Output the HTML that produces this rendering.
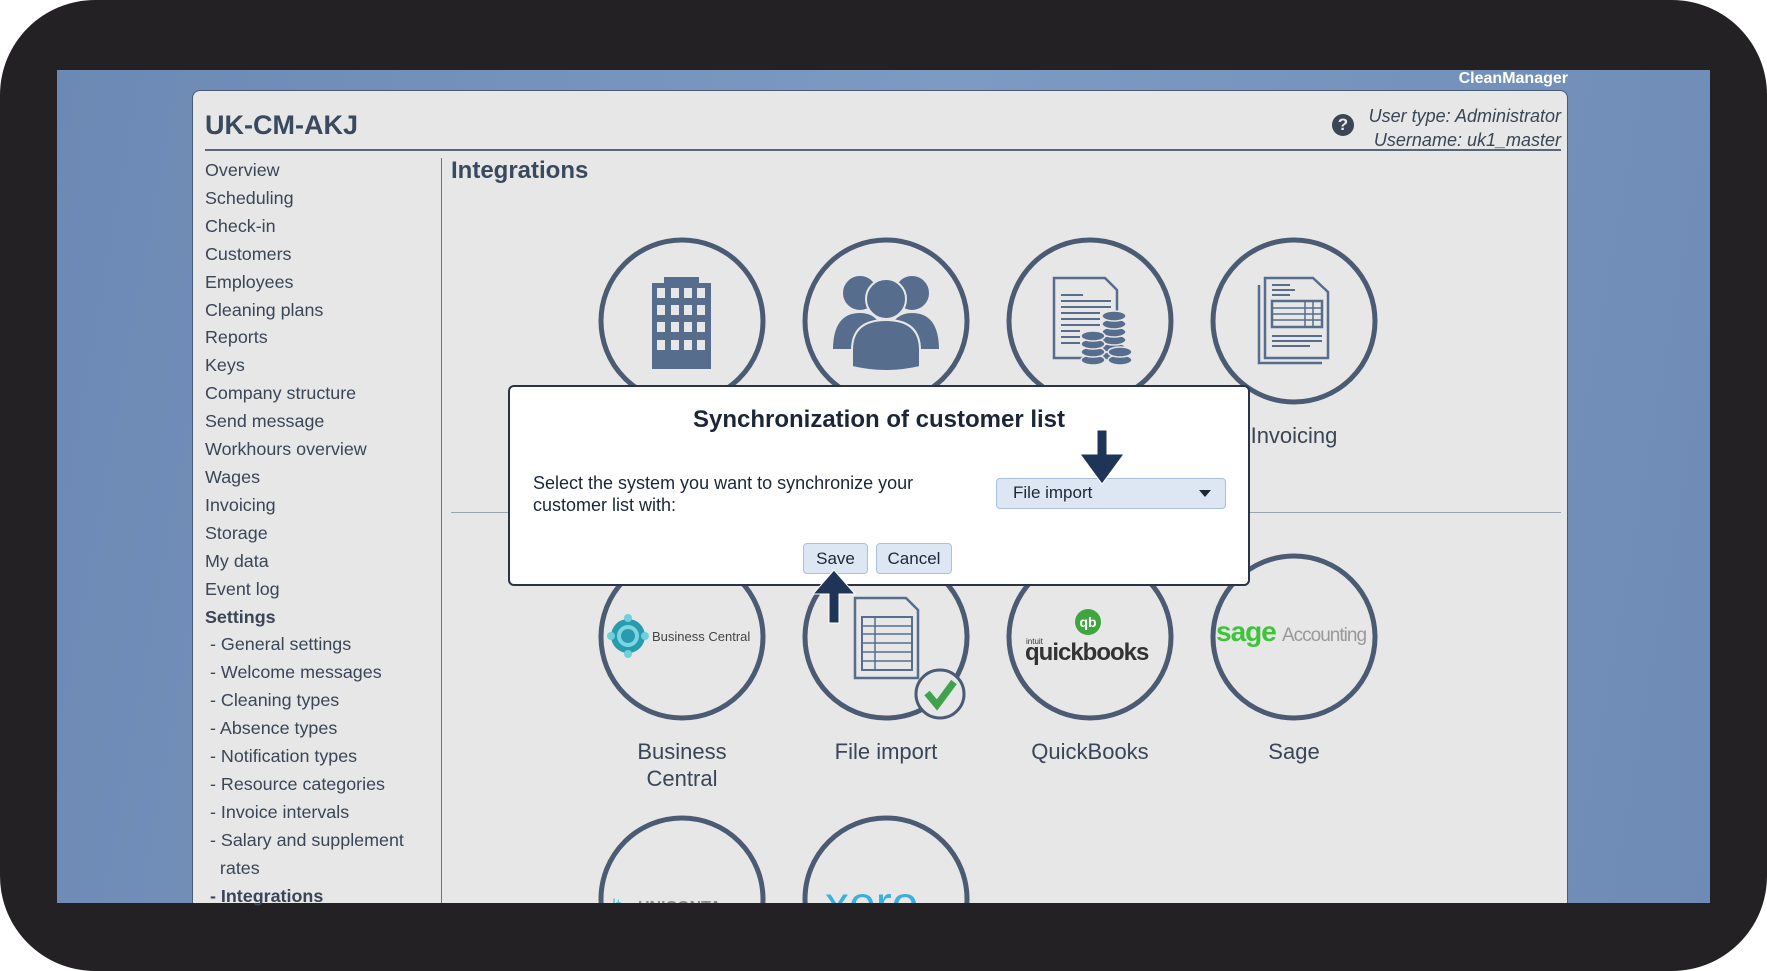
<!DOCTYPE html>
<html><head><meta charset="utf-8"><style>
*{margin:0;padding:0;box-sizing:border-box}
body{width:1767px;height:971px;background:#fff;font-family:"Liberation Sans",sans-serif;overflow:hidden;position:relative}
.frame{position:absolute;left:0;top:0;width:1767px;height:971px;background:#232123;border-radius:95px}
.screen{position:absolute;left:57px;top:70px;width:1653px;height:833px;background:linear-gradient(100deg,#6b89b4 0%,#7c9ac2 50%,#6d8bb5 100%);overflow:hidden}
.panel{position:absolute;left:192px;top:90px;width:1376px;height:813px;background:#e7e7e7;border-radius:8px 8px 0 0;border:1px solid #4a5a70;border-bottom:none}
.t{position:absolute;white-space:nowrap;color:#3a4556}
.side{position:absolute;left:205px;top:157px;font-size:17.9px;line-height:27.9px;color:#3a4556}
.side div{white-space:nowrap}
.lbl{position:absolute;font-size:22px;color:#3a4556;text-align:center;width:200px;line-height:27px}
</style></head><body>
<div class="frame"></div>
<div class="screen"></div>
<div class="t" style="left:1440px;top:70px;color:#fff;font-weight:bold;font-size:16px;width:128px;text-align:right">CleanManager</div>
<div class="panel"></div>
<div class="t" style="left:205px;top:110px;font-size:27px;font-weight:bold;color:#3a4a5e">UK-CM-AKJ</div>
<div class="t" style="top:104px;width:1261px;left:300px;text-align:right;font-style:italic;font-size:18px;line-height:24px">User type: Administrator<br>Username: uk1_master</div>
<div style="position:absolute;left:1332px;top:114px;width:22px;height:22px;border-radius:50%;background:#3a4556;color:#e7e7e7;font-weight:bold;font-size:17px;text-align:center;line-height:22px">?</div>
<div style="position:absolute;left:205px;top:149px;width:1356px;height:2px;background:#5a6678"></div>
<div style="position:absolute;left:441px;top:158px;width:1px;height:745px;background:#6a7484"></div>
<div class="side">
<div>Overview</div><div>Scheduling</div><div>Check-in</div><div>Customers</div><div>Employees</div><div>Cleaning plans</div><div>Reports</div><div>Keys</div><div>Company structure</div><div>Send message</div><div>Workhours overview</div><div>Wages</div><div>Invoicing</div><div>Storage</div><div>My data</div><div>Event log</div><div style="font-weight:bold">Settings</div>
<div>&nbsp;- General settings</div><div>&nbsp;- Welcome messages</div><div>&nbsp;- Cleaning types</div><div>&nbsp;- Absence types</div><div>&nbsp;- Notification types</div><div>&nbsp;- Resource categories</div><div>&nbsp;- Invoice intervals</div><div>&nbsp;- Salary and supplement</div><div>&nbsp;&nbsp;&nbsp;rates</div><div style="font-weight:bold">&nbsp;- Integrations</div>
</div>
<div class="t" style="left:451px;top:157px;font-size:24px;font-weight:bold;color:#3a4a5e">Integrations</div>
<div style="position:absolute;left:451px;top:512px;width:1110px;height:1px;background:#9aa2ae"></div>

<svg width="1767" height="971" style="position:absolute;left:0;top:0" viewBox="0 0 1767 971">
<defs><clipPath id="c"><rect x="57" y="70" width="1653" height="833"/></clipPath></defs>
<g clip-path="url(#c)" fill="none" stroke="#4b5b74" stroke-width="5">
<circle cx="682" cy="321" r="81"/><circle cx="886" cy="321" r="81"/><circle cx="1090" cy="321" r="81"/><circle cx="1294" cy="321" r="81"/>
<circle cx="682" cy="637" r="81"/><circle cx="886" cy="637" r="81"/><circle cx="1090" cy="637" r="81"/><circle cx="1294" cy="637" r="81"/>
<circle cx="682" cy="899" r="81"/><circle cx="886" cy="899" r="81"/>
</g>
<rect x="652" y="283" width="59" height="86" fill="#566d8e"/><rect x="664" y="277" width="35" height="8" fill="#566d8e"/>
<g fill="#e7e7e7">
<rect x="657" y="288" width="8" height="10"/><rect x="671" y="288" width="8" height="10"/><rect x="684" y="288" width="8" height="10"/><rect x="697" y="288" width="8" height="10"/>
<rect x="657" y="305" width="8" height="10"/><rect x="671" y="305" width="8" height="10"/><rect x="684" y="305" width="8" height="10"/><rect x="697" y="305" width="8" height="10"/>
<rect x="657" y="322" width="8" height="10"/><rect x="671" y="322" width="8" height="10"/><rect x="684" y="322" width="8" height="10"/><rect x="697" y="322" width="8" height="10"/>
<rect x="657" y="340" width="8" height="10"/><rect x="671" y="340" width="8" height="10"/><rect x="684" y="340" width="8" height="10"/><rect x="697" y="340" width="8" height="10"/>
</g>
<g fill="#566d8e" stroke="#e7e7e7" stroke-width="2">
<circle cx="860" cy="293" r="18"/><circle cx="912" cy="293" r="18"/>
<path d="M832 350 Q832 312 860 312 Q886 312 886 350 Z"/><path d="M886 350 Q886 312 912 312 Q940 312 940 350 Z"/>
<circle cx="886" cy="299" r="20"/>
<path d="M852 367 L852 350 Q852 320 886 320 Q920 320 920 350 L920 367 Q886 375 852 367Z"/>
</g>
<g fill="none" stroke="#566d8e" stroke-width="2.5">
<path d="M1054 278 L1105 278 L1117 290 L1117 358 L1054 358 Z"/>
</g>
<g stroke="#566d8e" stroke-width="2"><line x1="1061" y1="295" x2="1083" y2="295"/><line x1="1061" y1="301" x2="1111" y2="301"/><line x1="1061" y1="307" x2="1111" y2="307"/><line x1="1061" y1="313" x2="1100" y2="313"/><line x1="1061" y1="319" x2="1100" y2="319"/><line x1="1061" y1="325" x2="1100" y2="325"/><line x1="1061" y1="331" x2="1080" y2="331"/><line x1="1061" y1="337" x2="1080" y2="337"/><line x1="1061" y1="343" x2="1080" y2="343"/></g>
<g fill="#566d8e" stroke="#e7e7e7" stroke-width="1.5">
<ellipse cx="1114" cy="356" rx="12" ry="5"/><ellipse cx="1114" cy="348" rx="12" ry="5"/><ellipse cx="1114" cy="340" rx="12" ry="5"/><ellipse cx="1114" cy="332" rx="12" ry="5"/><ellipse cx="1114" cy="324" rx="12" ry="5"/><ellipse cx="1114" cy="316" rx="12" ry="5"/>
<ellipse cx="1093" cy="360" rx="12" ry="5"/><ellipse cx="1093" cy="352" rx="12" ry="5"/><ellipse cx="1093" cy="344" rx="12" ry="5"/><ellipse cx="1093" cy="336" rx="12" ry="5"/>
<ellipse cx="1120" cy="360" rx="12" ry="5"/><ellipse cx="1120" cy="352" rx="12" ry="5"/>
</g>
<g fill="none" stroke="#566d8e" stroke-width="2.5">
<path d="M1259 285 L1259 363 L1322 363"/>
<path d="M1265 278 L1313 278 L1328 292 L1328 358 L1265 358 Z"/>
<rect x="1272" y="301" width="50" height="26"/>
</g>
<g stroke="#566d8e" stroke-width="1.5"><line x1="1272" y1="308" x2="1322" y2="308"/><line x1="1272" y1="314" x2="1322" y2="314"/><line x1="1272" y1="320" x2="1322" y2="320"/><line x1="1305" y1="301" x2="1305" y2="327"/><line x1="1313" y1="301" x2="1313" y2="327"/></g>
<g stroke="#566d8e" stroke-width="2"><line x1="1272" y1="285" x2="1290" y2="285"/><line x1="1272" y1="290" x2="1295" y2="290"/><line x1="1272" y1="295" x2="1290" y2="295"/><line x1="1272" y1="336" x2="1322" y2="336"/><line x1="1272" y1="341" x2="1322" y2="341"/><line x1="1272" y1="346" x2="1310" y2="346"/></g>
<circle cx="628" cy="636" r="17" fill="#2a9bae"/><circle cx="628" cy="636" r="9" fill="none" stroke="#7ad6e0" stroke-width="4"/>
<circle cx="628" cy="618" r="4" fill="#6fd0db"/><circle cx="628" cy="654" r="4" fill="#6fd0db"/><circle cx="611" cy="636" r="4" fill="#6fd0db"/><circle cx="645" cy="636" r="4" fill="#6fd0db"/>
<text x="652" y="641" font-family="Liberation Sans" font-size="13" fill="#444">Business Central</text>
<path d="M855 598 L906 598 L918 610 L918 678 L855 678 Z" fill="#e7e7e7" stroke="#566d8e" stroke-width="2.5"/>
<rect x="862" y="617" width="50" height="53" fill="none" stroke="#566d8e" stroke-width="2"/>
<g stroke="#566d8e" stroke-width="1.5"><line x1="862" y1="626" x2="912" y2="626"/><line x1="862" y1="634" x2="912" y2="634"/><line x1="862" y1="643" x2="912" y2="643"/><line x1="862" y1="652" x2="912" y2="652"/><line x1="862" y1="661" x2="912" y2="661"/><line x1="875" y1="617" x2="875" y2="670"/></g>
<circle cx="940" cy="694" r="24" fill="#e7e7e7" stroke="#4b5b74" stroke-width="3"/>
<path d="M927 693 L937 705 L954 682" fill="none" stroke="#3fa34d" stroke-width="7"/>
<circle cx="1088" cy="622" r="13" fill="#3ea53f"/><text x="1088" y="627" text-anchor="middle" font-family="Liberation Sans" font-size="14" font-weight="bold" fill="#fff">qb</text>
<text x="1026" y="644" font-family="Liberation Sans" font-size="8" fill="#333">intuit</text>
<text x="1025" y="660" font-family="Liberation Sans" font-size="24" font-weight="bold" fill="#333" letter-spacing="-1">quickbooks</text>
<text x="1216" y="641" font-family="Liberation Sans" font-size="28" font-weight="bold" fill="#3ec43a" letter-spacing="-1">sage</text>
<text x="1282" y="641" font-family="Liberation Sans" font-size="19" fill="#999" letter-spacing="-1">Accounting</text>
<g clip-path="url(#c)">
<text x="612" y="912" font-family="Liberation Sans" font-size="18" fill="#6cc">lt</text>
<text x="638" y="912" font-family="Liberation Sans" font-size="16" font-weight="bold" fill="#888">UNICONTA</text>
<text x="825" y="920" font-family="Liberation Sans" font-size="48" fill="#3ab0dd">xero</text>
</g>
</svg>

<div class="lbl" style="left:1194px;top:422px">Invoicing</div>
<div class="lbl" style="left:582px;top:738px">Business<br>Central</div>
<div class="lbl" style="left:786px;top:738px">File import</div>
<div class="lbl" style="left:990px;top:738px">QuickBooks</div>
<div class="lbl" style="left:1194px;top:738px">Sage</div>

<div style="position:absolute;left:508px;top:385px;width:742px;height:201px;background:#fff;border:2px solid #2a3444;border-radius:6px"></div>
<div class="t" style="left:508px;top:406px;width:742px;text-align:center;font-size:24px;font-weight:bold;color:#1c2638">Synchronization of customer list</div>
<div class="t" style="left:533px;top:472px;font-size:18px;line-height:22px;color:#1c2638">Select the system you want to synchronize your<br>customer list with:</div>
<div style="position:absolute;left:996px;top:478px;width:230px;height:31px;background:#dde7f3;border:1px solid #a9c0e0;border-radius:4px"></div>
<div class="t" style="left:1013px;top:483px;font-size:17px;color:#1c2638">File import</div>
<div style="position:absolute;left:1199px;top:490px;border-left:6px solid transparent;border-right:6px solid transparent;border-top:7px solid #1c2638"></div>
<div style="position:absolute;left:803px;top:543px;width:65px;height:31px;background:#dde7f3;border:1px solid #a9c0e0;border-radius:4px;font-size:17px;text-align:center;line-height:29px;color:#1c2638">Save</div>
<div style="position:absolute;left:876px;top:543px;width:76px;height:31px;background:#dde7f3;border:1px solid #a9c0e0;border-radius:4px;font-size:17px;text-align:center;line-height:29px;color:#1c2638">Cancel</div>
<svg width="1767" height="971" style="position:absolute;left:0;top:0">
<path d="M1097 430 L1107 430 L1107 454 L1124 454 L1102 484 L1080 454 L1097 454 Z" fill="#1f3557" stroke="#fff" stroke-width="1"/>
<path d="M829 623 L839 623 L839 594 L855 594 L834 570 L813 594 L829 594 Z" fill="#1f3557" stroke="#fff" stroke-width="1"/>
</svg>
</body></html>
